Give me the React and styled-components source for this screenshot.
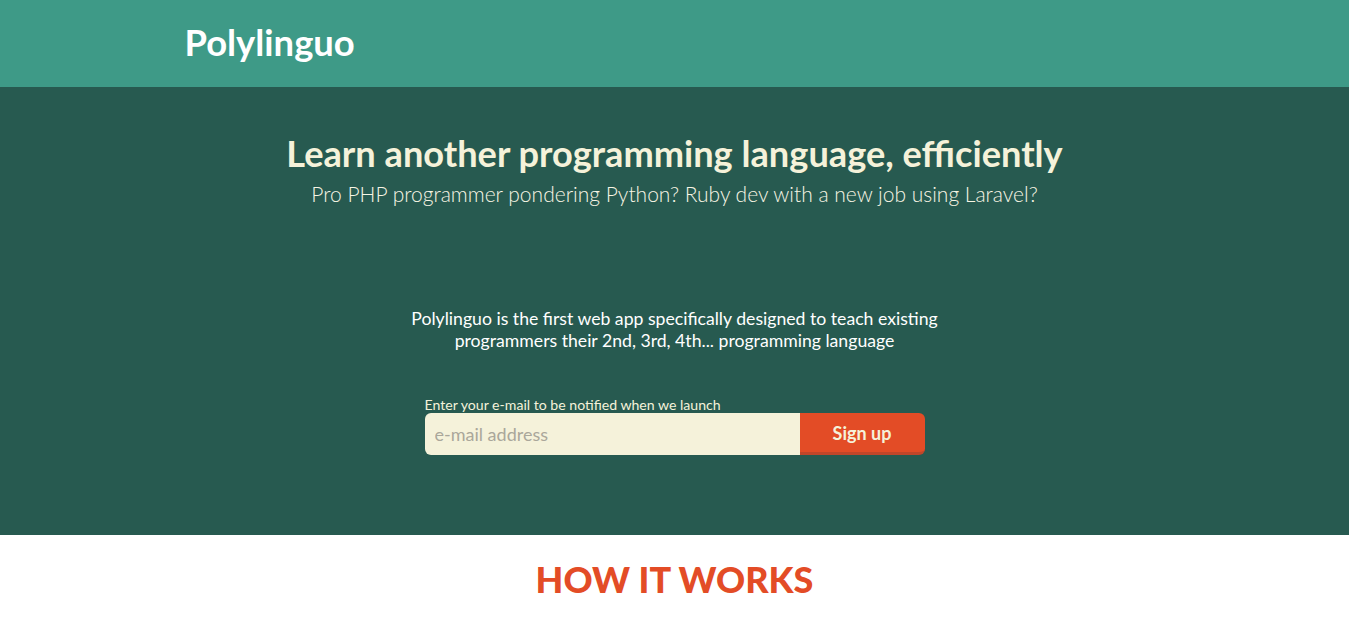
import styled, { createGlobalStyle } from "styled-components";

const GlobalStyle = createGlobalStyle`
  body {
    margin: 0;
    font-family: Lato, "Open Sans", sans-serif;
    background: #ffffff;
  }
  * { box-sizing: border-box; }
`;

const Header = styled.header`
  height: 87px;
  background-color: #3e9a87;
  display: flex;
  align-items: center;
`;

const Container = styled.div`
  width: 980px;
  margin: 0 auto;
`;

const Logo = styled.h1`
  margin: 0;
  font-size: 36.4px;
  font-weight: 700;
  color: #ffffff;
  line-height: 1;
  padding-bottom: 2px;
`;

const Hero = styled.section`
  background-color: #275a50;
  height: 448px;
  padding-top: 44px;
  color: #f5f2da;
  text-align: center;
`;

const Title = styled.h2`
  margin: 0;
  font-size: 36.2px;
  font-weight: 700;
  line-height: 44px;
`;

const Subtitle = styled.p`
  margin: 6px 0 0;
  font-size: 21px;
  font-weight: 300;
  line-height: 26px;
  color: #f7f5e4;
`;

const Pitch = styled.p`
  margin: 101px auto 0;
  width: 560px;
  font-size: 17.65px;
  line-height: 22px;
  color: #ffffff;
`;

const Form = styled.form`
  width: 500px;
  margin: 45px auto 0;
  text-align: left;
`;

const Label = styled.label`
  display: block;
  font-size: 14.1px;
  line-height: 16px;
  color: #f5f2da;
`;

const Row = styled.div`
  display: flex;
  height: 42px;
`;

const Input = styled.input`
  flex: 1;
  border: none;
  border-radius: 6px 0 0 6px;
  background: #f5f2da;
  padding: 0 10px;
  font-family: inherit;
  font-size: 18px;
  color: #333;
  outline: none;
  &::placeholder { color: #aaa79a; }
`;

const Button = styled.button`
  width: 125px;
  border: none;
  border-bottom: 3px solid #c0462a;
  border-radius: 0 6px 6px 0;
  background: #e34c26;
  color: #f5f2da;
  font-family: inherit;
  font-size: 18px;
  font-weight: 700;
  padding: 0;
  cursor: pointer;
`;

const Works = styled.section`
  text-align: center;
  padding-top: 22px;
`;

const WorksTitle = styled.h2`
  margin: 0;
  font-size: 36px;
  font-weight: 900;
  line-height: 44px;
  color: #e34c26;
`;

export default function App() {
  return (
    <>
      <GlobalStyle />
      <Header>
        <Container>
          <Logo>Polylinguo</Logo>
        </Container>
      </Header>
      <Hero>
        <Title>Learn another programming language, efficiently</Title>
        <Subtitle>Pro PHP programmer pondering Python? Ruby dev with a new job using Laravel?</Subtitle>
        <Pitch>
          Polylinguo is the first web app specifically designed to teach existing programmers their 2nd, 3rd, 4th... programming language
        </Pitch>
        <Form onSubmit={(e) => e.preventDefault()}>
          <Label htmlFor="email">Enter your e-mail to be notified when we launch</Label>
          <Row>
            <Input id="email" type="email" placeholder="e-mail address" />
            <Button type="submit">Sign up</Button>
          </Row>
        </Form>
      </Hero>
      <Works>
        <WorksTitle>HOW IT WORKS</WorksTitle>
      </Works>
    </>
  );
}
